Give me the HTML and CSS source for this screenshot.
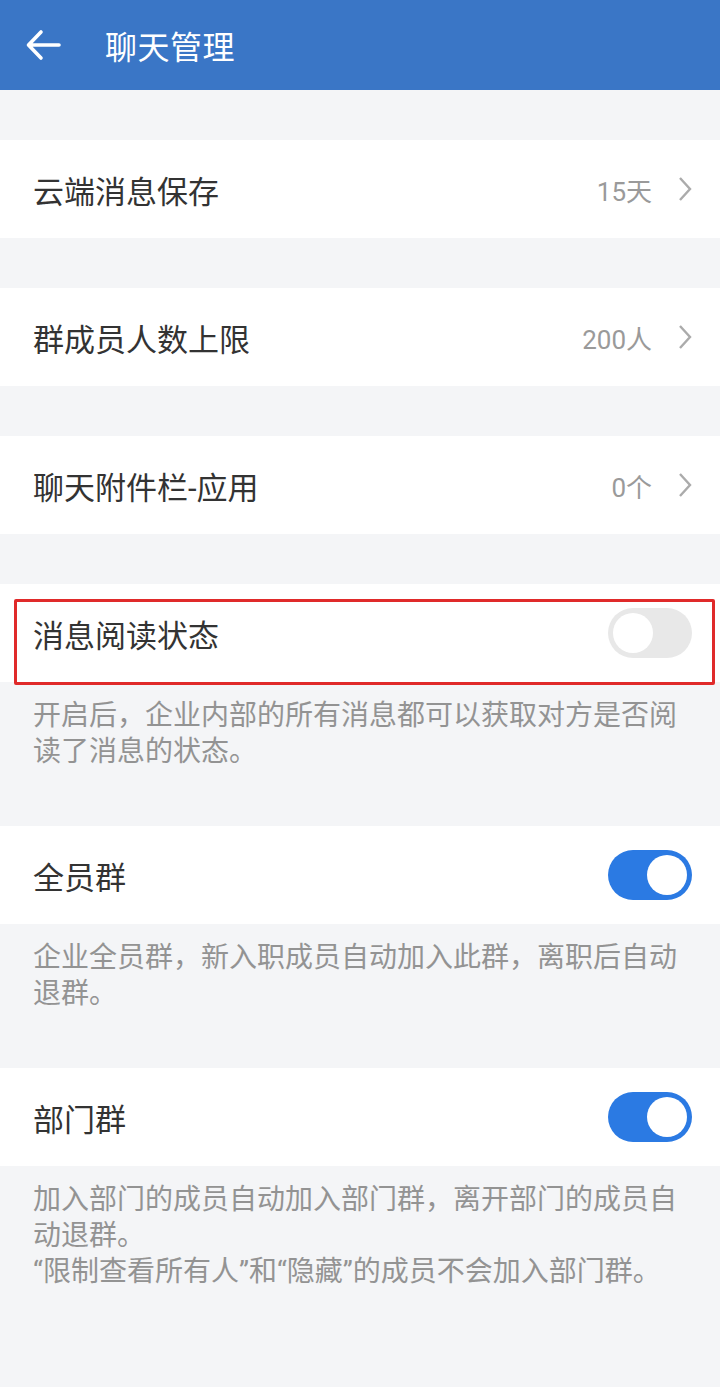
FILE: index.html
```html
<!DOCTYPE html>
<html lang="zh-CN">

<head>
    <meta charset="UTF-8">
    <meta name="viewport" content="width=device-width, initial-scale=1.0">
    <title>聊天管理</title>

    <link rel="stylesheet" href="styles.css">
</head>

<body>
    <div id="header">
        <svg class="back" width="36" height="32" viewBox="0 0 36 32">
            <path d="M4 16 H34 M16 3 L3.5 16 L16 29" fill="none" stroke="#fff" stroke-width="3.6" stroke-linecap="round" stroke-linejoin="round"/>
        </svg>
        <h1>聊天管理</h1>
    </div>

    <div class="list">
        <!-- Simple rows with a value and arrow -->
        <div class="row">
            <span class="label">云端消息保存</span>
            <span class="value">15天</span>
            <svg class="arrow" width="14" height="26" viewBox="0 0 14 26"><path d="M2 2 L12 13 L2 24" fill="none" stroke="#ababab" stroke-width="2.4"/></svg>
        </div>

        <div class="row">
            <span class="label">群成员人数上限</span>
            <span class="value">200人</span>
            <svg class="arrow" width="14" height="26" viewBox="0 0 14 26"><path d="M2 2 L12 13 L2 24" fill="none" stroke="#ababab" stroke-width="2.4"/></svg>
        </div>

        <div class="row">
            <span class="label">聊天附件栏-应用</span>
            <span class="value">0个</span>
            <svg class="arrow" width="14" height="26" viewBox="0 0 14 26"><path d="M2 2 L12 13 L2 24" fill="none" stroke="#ababab" stroke-width="2.4"/></svg>
        </div>

        <!-- Rows with a switch and a note below -->
        <div class="row marked">
            <span class="label">消息阅读状态</span>
            <span class="switch off"><span class="knob"></span></span>
            <div class="highlight"></div>
        </div>
        <p class="note">开启后，企业内部的所有消息都可以获取对方是否阅读了消息的状态。</p>

        <div class="row">
            <span class="label">全员群</span>
            <span class="switch on"><span class="knob"></span></span>
        </div>
        <p class="note">企业全员群，新入职成员自动加入此群，离职后自动退群。</p>

        <div class="row">
            <span class="label">部门群</span>
            <span class="switch on"><span class="knob"></span></span>
        </div>
        <p class="note">加入部门的成员自动加入部门群，离开部门的成员自动退群。<br>“限制查看所有人”和“隐藏”的成员不会加入部门群。</p>
    </div>
</body>

</html>
```

FILE: styles.css
```css
body {
  margin: 0;
  min-height: 100vh;
  background: #f4f5f7;
  font-family: Roboto, 'Noto Sans CJK SC', sans-serif;
}
/* Blue title bar */
#header {
  height: 90px;
  background: #3a76c6;
  display: flex;
  align-items: center;
  padding-left: 25px;
}
#header .back {
  display: block;
}
#header h1 {
  margin: 0 0 0 44px;
  font-size: 32px;
  font-weight: 400;
  color: #ffffff;
  letter-spacing: 0.5px;
}
.list {
  padding-top: 50px;
}
/* White setting row */
.row {
  position: relative;
  height: 98px;
  background: #ffffff;
  display: flex;
  align-items: center;
  padding: 0 28px 0 33px;
  margin-bottom: 50px;
}
.row .label {
  flex: 1;
  font-size: 31px;
  color: #333333;
}
.row .value {
  font-size: 26px;
  color: #9a9a9a;
  margin-right: 26px;
}
.row .arrow {
  display: block;
}
.row.marked,
.list .row:has(+ .note) {
  margin-bottom: 0;
}
/* Toggle switch */
.switch {
  width: 84px;
  height: 50px;
  border-radius: 25px;
  display: flex;
  align-items: center;
  padding: 0 5px;
  box-sizing: border-box;
}
.switch .knob {
  width: 40px;
  height: 40px;
  border-radius: 50%;
  background: #ffffff;
}
.switch.on {
  background: #2b7ae3;
  justify-content: flex-end;
}
.switch.off {
  background: #e8e8e8;
  justify-content: flex-start;
}
/* Red annotation frame */
.highlight {
  position: absolute;
  left: 14px;
  right: 5px;
  top: 15px;
  bottom: -3px;
  border: 3px solid #e02a2a;
  border-radius: 2px;
}
.note {
  margin: 0 0 56px;
  padding: 16px 33px 0;
  font-size: 28px;
  line-height: 36px;
  color: #939393;
}
```
